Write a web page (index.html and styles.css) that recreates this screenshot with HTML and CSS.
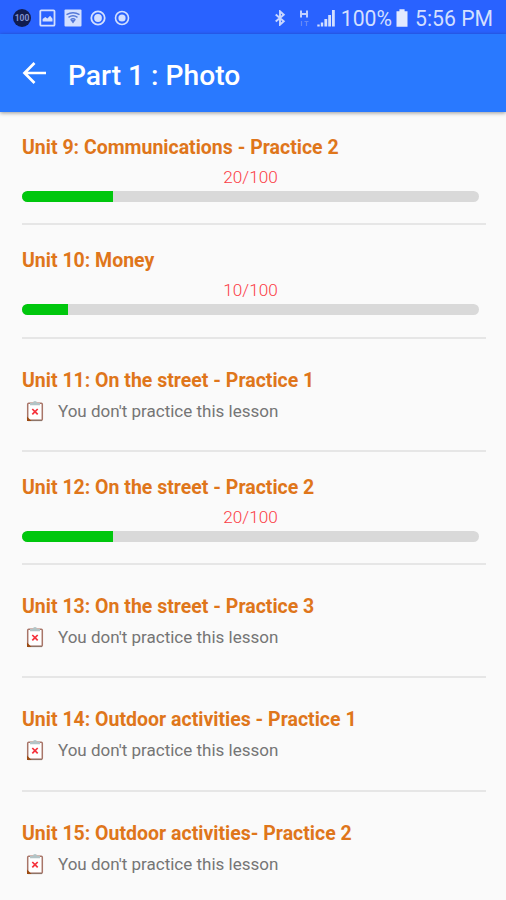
FILE: index.html
```
<!DOCTYPE html>
<html lang="en">
<head>
    <meta charset="UTF-8">
    <meta name="viewport" content="width=device-width, initial-scale=1.0">
    <title>Part 1 : Photo</title>
    <link rel="stylesheet" href="styles.css">
</head>
<body>
    <!-- Icon shared by the lessons without a score -->
    <svg class="symbols">
        <symbol id="clipboard" viewBox="0 0 18 22">
            <rect x="1.7" y="3.2" width="14.6" height="17" rx="1" fill="#fff" stroke="#a87568" stroke-width="1.5"/>
            <path d="M2 20.5h14" stroke="#8c7468" stroke-width="1.2"/>
            <path d="M1 16.5V21h4.5z" fill="#9b4b12"/>
            <path d="M4 5.3V3h3a2 2 0 0 1 4 0h3v2.3z" fill="#b3c4c6"/>
            <path d="M6.3 9l5.4 5.4M11.7 9l-5.4 5.4" stroke="#f5323c" stroke-width="1.7"/>
        </symbol>
    </svg>

    <div class="status-bar">
        <div class="status-left">
            <span class="badge">100</span>
            <svg width="17" height="18" viewBox="0 0 17 18">
                <rect x="1.3" y="1.3" width="14.2" height="15.4" rx="1" fill="none" stroke="#d3dfff" stroke-width="1.8"/>
                <path d="M3.6 12.5V10l2.7-2 2.1 1.5 2.7-2.8 2.4 3v2.8z" fill="#d3dfff"/>
            </svg>
            <svg width="18" height="18" viewBox="0 0 18 18">
                <rect x="0.5" y="0.5" width="17" height="17" rx="1" fill="#d3dfff"/>
                <path d="M2.5 5.7q6.5-4 13 0M4.5 8.3q4.5-3 9 0M6.5 10.7q2.5-1.8 5 0" fill="none" stroke="#5578d8" stroke-width="1.4"/>
                <path d="M6.5 11h5L9 14.5z" fill="#5578d8"/>
            </svg>
            <svg width="16" height="16" viewBox="0 0 16 16">
                <circle cx="8" cy="8" r="6.7" fill="none" stroke="#d3dfff" stroke-width="1.8"/>
                <circle cx="8" cy="8" r="3.9" fill="#d3dfff"/>
            </svg>
            <svg width="16" height="16" viewBox="0 0 16 16">
                <circle cx="8" cy="8" r="6.5" fill="none" stroke="#d3dfff" stroke-width="1.6"/>
                <circle cx="8" cy="8" r="3.6" fill="#d3dfff"/>
            </svg>
        </div>
        <div class="status-right">
            <svg class="bluetooth" width="12" height="16" viewBox="0 0 12 18">
                <path d="M1.2 5l9 7.6L6 16.5v-15l4.2 3.9L1.2 13" fill="none" stroke="#c8d6ff" stroke-width="2.2"/>
            </svg>
            <svg class="network" width="10" height="18" viewBox="0 0 10 18">
                <path d="M2 1.5v7M8 1.5v7M2 5h6" fill="none" stroke="#c0d0ff" stroke-width="2"/>
                <path d="M2.5 12v5M7.5 12v5M5.5 12.5h4" stroke="#6689f5" stroke-width="1.2"/>
            </svg>
            <svg class="signal" width="18" height="18" viewBox="0 0 18 18">
                <path d="M1.5 17.5v-2M5 17.5v-4" stroke="#d3dfff" stroke-width="2.4"/>
                <path d="M8.8 17.5V10M12.6 17.5V6M16.4 17.5V1" stroke="#d3dfff" stroke-width="2.8"/>
            </svg>
            <span class="percent">100%</span>
            <svg class="battery" width="12" height="18" viewBox="0 0 12 18">
                <path d="M.5 2.2H3.4V.3h5.2v1.9h2.9V17.7H.5z" fill="#e3eaff"/>
            </svg>
            <span class="time">5:56 PM</span>
        </div>
    </div>

    <header class="toolbar">
        <svg class="back" width="26" height="24" viewBox="0 0 26 24">
            <path d="M12.5 2L2.5 12l10 10M2.5 12h21.5" fill="none" stroke="#fff" stroke-width="2.7"/>
        </svg>
        <h1>Part 1 : Photo</h1>
    </header>

    <main class="lessons">
        <section class="lesson scored">
            <h2>Unit 9: Communications - Practice 2</h2>
            <div class="score">20/100</div>
            <div class="bar"><div class="fill" style="width: 20%"></div></div>
        </section>
        <section class="lesson scored">
            <h2>Unit 10: Money</h2>
            <div class="score">10/100</div>
            <div class="bar"><div class="fill" style="width: 10%"></div></div>
        </section>
        <section class="lesson">
            <h2>Unit 11: On the street - Practice 1</h2>
            <div class="note"><svg class="clip"><use href="#clipboard"/></svg>You don't practice this lesson</div>
        </section>
        <section class="lesson scored">
            <h2>Unit 12: On the street - Practice 2</h2>
            <div class="score">20/100</div>
            <div class="bar"><div class="fill" style="width: 20%"></div></div>
        </section>
        <section class="lesson">
            <h2>Unit 13: On the street - Practice 3</h2>
            <div class="note"><svg class="clip"><use href="#clipboard"/></svg>You don't practice this lesson</div>
        </section>
        <section class="lesson">
            <h2>Unit 14: Outdoor activities - Practice 1</h2>
            <div class="note"><svg class="clip"><use href="#clipboard"/></svg>You don't practice this lesson</div>
        </section>
        <section class="lesson">
            <h2>Unit 15: Outdoor activities- Practice 2</h2>
            <div class="note"><svg class="clip"><use href="#clipboard"/></svg>You don't practice this lesson</div>
        </section>
    </main>
</body>
</html>
```
FILE: styles.css
```
* {
    box-sizing: border-box;
}
body {
    margin: 0;
    height: 900px;
    overflow: hidden;
    background: #fafafa;
    font-family: Roboto, "Liberation Sans", sans-serif;
}
h1, h2 {
    margin: 0;
    white-space: nowrap;
}
.symbols {
    display: none;
}
.status-bar {
    display: flex;
    justify-content: space-between;
    height: 34px;
    padding: 2px 13px 0;
    background: #2962ff;
    color: #d3dfff;
}
.status-left, .status-right {
    display: flex;
    align-items: center;
}
.status-left {
    gap: 8px;
}
.badge {
    width: 18px;
    height: 18px;
    border-radius: 50%;
    background: #101c50;
    color: #8495cf;
    font-size: 8.5px;
    font-weight: 700;
    line-height: 18px;
    text-align: center;
}
.status-right {
    font-size: 21.2px;
    white-space: nowrap;
}
.network {
    margin-left: 13px;
}
.signal {
    margin-left: 8px;
}
.percent {
    margin-left: 6px;
}
.battery {
    margin: 0 7px 0 4px;
}
.toolbar {
    display: flex;
    align-items: center;
    height: 78px;
    padding-left: 22px;
    background: #2979ff;
    box-shadow: 0 1px 4px rgba(0, 0, 0, 0.4);
    color: #fff;
}
.toolbar h1 {
    margin: 5px 0 0 20px;
    font-size: 28.2px;
    font-weight: 500;
}
.lessons {
    padding: 0 20px 0 22px;
}
.lesson {
    height: 113.3px;
    padding-top: 30px;
    border-bottom: 2px solid #e6e6e6;
}
.scored {
    padding-top: 24px;
}
.lesson h2 {
    color: #df761b;
    font-size: 19.5px;
    font-weight: 700;
    line-height: 24px;
}
.score {
    padding-right: 7px;
    margin-top: 7px;
    color: #fa3c46;
    font-size: 17.2px;
    font-weight: 300;
    line-height: 20px;
    text-align: center;
}
.bar {
    height: 11px;
    margin: 4px 7px 0 0;
    border-radius: 6px;
    background: #d9d9d9;
    overflow: hidden;
}
.fill {
    height: 100%;
    background: #00c70d;
}
.note {
    display: flex;
    align-items: center;
    height: 22px;
    margin-top: 7px;
    color: #757575;
    font-size: 17px;
}
.clip {
    width: 18px;
    height: 22px;
    margin: 0 14px 0 4px;
}
```
